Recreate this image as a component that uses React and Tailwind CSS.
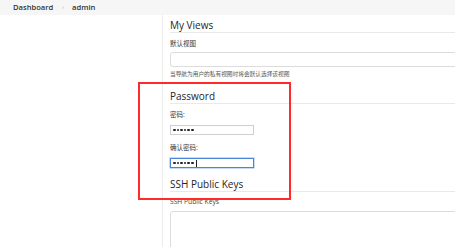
import React from 'react'

const font = { fontFamily: '"Open Sans", "Noto Sans CJK SC", sans-serif' }

const Heading = ({ children, className = '' }) => (
  <div className={`text-[10px] leading-[12px] pb-[1px] text-[#262626] border-b border-[#e9e9e9] ${className}`}>
    {children}
  </div>
)

const Label = ({ children, className = '' }) => (
  <div className={`text-[6.5px] leading-[8px] text-[#333] ${className}`}>{children}</div>
)

const PasswordBox = ({ focused }) => (
  <div
    className={`mt-[6px] w-[84px] h-[10px] flex items-center gap-[1px] pl-[2px] bg-white border ${
      focused ? 'border-[#4a86d8] shadow-[0_0_0_0.5px_#8fb7ee]' : 'border-[#cfcfcf]'
    }`}
  >
    {[0, 1, 2, 3, 4, 5].map((i) => (
      <span key={i} className="w-[2.6px] h-[2.6px] rounded-full bg-[#222]"></span>
    ))}
    {focused && <span className="ml-[1px] w-px h-[7px] bg-[#222]"></span>}
  </div>
)

const App = () => {
  return (
    <div className="relative w-[455px] h-[247px] overflow-hidden bg-white" style={font}>
      <div className="h-[15px] bg-[#f6f6f6] flex items-center pl-[13px] text-[7.6px] text-[#333]">
        <span className="font-semibold">Dashboard</span>
        <span className="ml-[9px] text-[#aaa] text-[6px]">›</span>
        <span className="ml-[8px] font-semibold">admin</span>
      </div>

      <div className="flex h-[232px]">
        <div className="w-[163px] shrink-0 border-r border-[#ececec]"></div>

        <div className="flex-1 pl-[7px] overflow-hidden">
          <Heading className="mt-[4px] w-[300px]">My Views</Heading>
          <Label className="mt-[7px]">默认视图</Label>
          <div className="mt-[4px] w-[300px] h-[15px] border border-[#dcdcdc] rounded-[3px]"></div>
          <div className="mt-[3px] text-[5.7px] leading-[8px] text-[#555]">当导航为用户的私有视图时将会默认选择该视图</div>

          <Heading className="mt-[12px] w-[300px]">Password</Heading>
          <Label className="mt-[7px]">密码:</Label>
          <PasswordBox />
          <Label className="mt-[9px]">确认密码:</Label>
          <PasswordBox focused />

          <Heading className="mt-[10px] w-[300px]">SSH Public Keys</Heading>
          <div className="mt-[6px] text-[6.7px] leading-[8px] text-[#444]">SSH Public Keys</div>
          <div className="mt-[5px] w-[300px] h-[60px] border border-[#dcdcdc] rounded-[3px]"></div>
        </div>
      </div>

      <div className="absolute left-[138px] top-[82px] w-[153px] h-[118px] border-2 border-[#ff2b2b] pointer-events-none"></div>
    </div>
  )
}

export default App
